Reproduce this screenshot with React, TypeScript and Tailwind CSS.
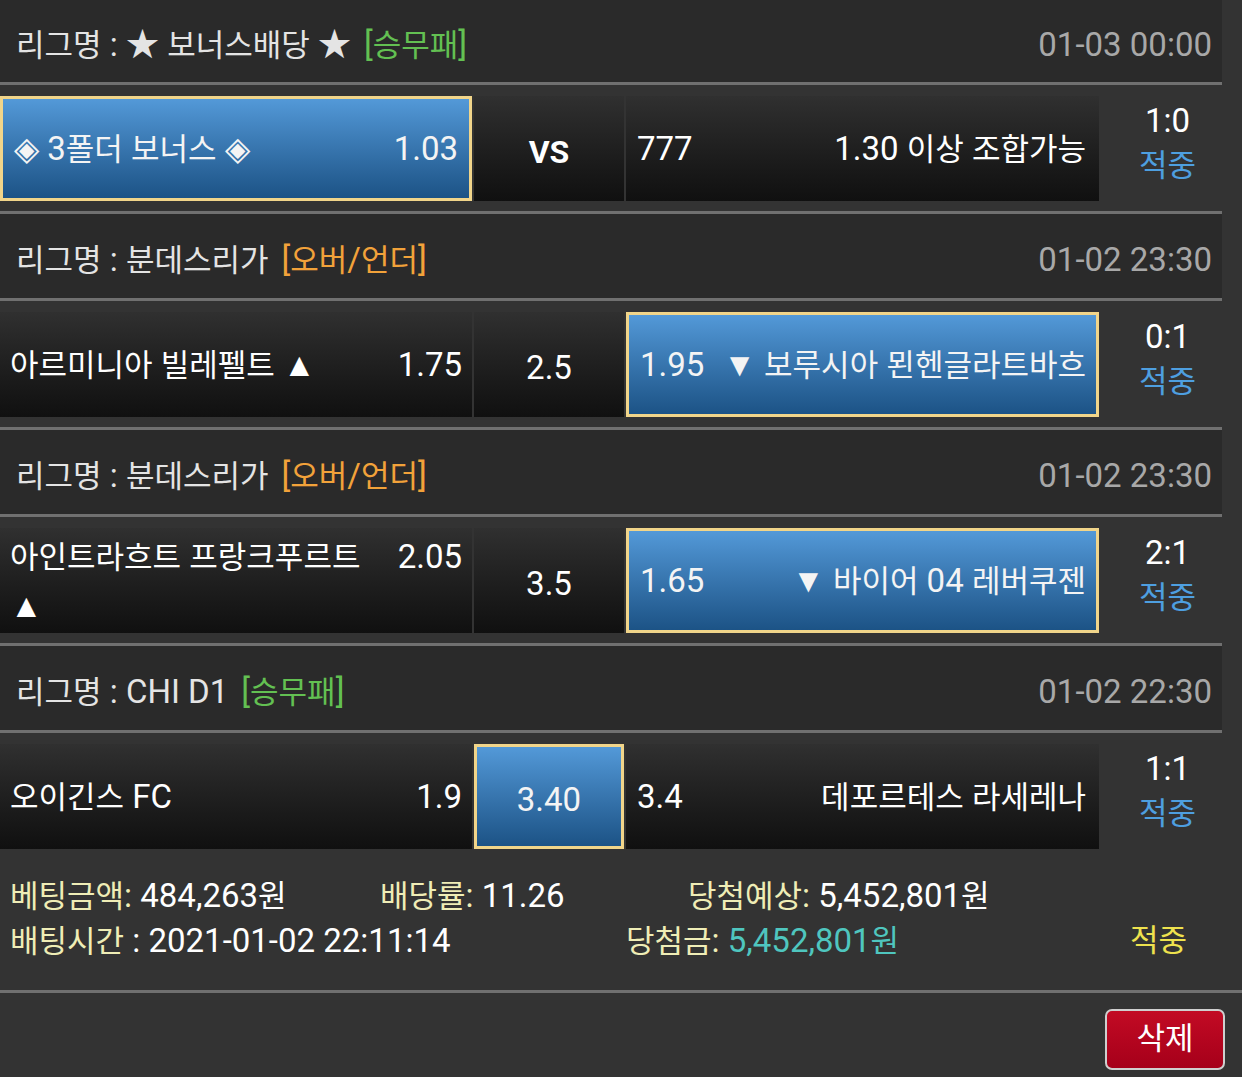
import React from "react";

const FONT = "font-['Roboto','Liberation_Sans','Noto_Sans_CJK_KR',sans-serif]";

function T({ s }: { s: string }) {
  const parts = s.split(/([\u1100-\u11FF\u3130-\u318F\uAC00-\uD7AF]+)/);
  return (
    <>
      {parts.map((p, i) =>
        /[\u1100-\u11FF\u3130-\u318F\uAC00-\uD7AF]/.test(p) ? (
          <span key={i} className="text-[31px]">
            {p}
          </span>
        ) : (
          <React.Fragment key={i}>{p}</React.Fragment>
        )
      )}
    </>
  );
}

type HeaderProps = {
  league: string;
  tag: string;
  tagClass: string;
  date: string;
  h: string;
};

function Header({ league, tag, tagClass, date, h }: HeaderProps) {
  return (
    <>
      <div
        className={`w-[1222px] ${h} bg-[#2a2a2a] flex items-center justify-between pl-[16px] pr-[10px] pt-[8px] leading-[48px]`}
      >
        <div className="text-[#e4e4e4] whitespace-nowrap">
          <T s={league} />
          <span className={`ml-[13px] ${tagClass}`}>
            <T s={tag} />
          </span>
        </div>
        <div className="text-[#a8a8a8] whitespace-nowrap">{date}</div>
      </div>
      <div className="w-[1222px] h-[3px] bg-[#707070]" />
    </>
  );
}

const NORMAL = "bg-linear-to-b from-[#303030] to-[#101010] text-white";
const SELECTED =
  "bg-linear-to-b from-[#5399d8] to-[#1c5386] border-[3px] border-[#f1d58a] text-[#f4f4f4]";

type RowProps = {
  home: string;
  homeOdd: string;
  homeSel?: boolean;
  mid: string;
  midBold?: boolean;
  midSel?: boolean;
  awayOdd: string;
  away: string;
  awaySel?: boolean;
  score: string;
  last?: boolean;
};

function Row({
  home,
  homeOdd,
  homeSel,
  mid,
  midBold,
  midSel,
  awayOdd,
  away,
  awaySel,
  score,
  last,
}: RowProps) {
  return (
    <>
      <div className={`flex gap-[2px] pt-[11px] ${last ? "pb-0" : "pb-[10px]"}`}>
        <div
          className={`w-[472px] h-[105px] shrink-0 flex items-center pt-[1px] ${
            homeSel ? `${SELECTED} pl-[11px] pr-[11px]` : `${NORMAL} pl-[10px] pr-[10px]`
          }`}
        >
          <div className="flex w-full items-start justify-between leading-[48px]">
            <span className="flex-1 min-w-0">
              <T s={home} />
            </span>
            <span className="shrink-0 ml-[20px]">{homeOdd}</span>
          </div>
        </div>
        <div
          className={`w-[150px] h-[105px] shrink-0 flex items-center justify-center pt-[6px] ${
            midSel ? SELECTED : NORMAL
          } ${midBold ? "font-bold text-[32px]" : ""}`}
        >
          {mid}
        </div>
        <div
          className={`w-[473px] h-[105px] shrink-0 flex items-center justify-between leading-[48px] pt-[1px] ${
            awaySel ? `${SELECTED} pl-[11px] pr-[10px]` : `${NORMAL} pl-[11px] pr-[13px]`
          }`}
        >
          <span className="whitespace-nowrap">{awayOdd}</span>
          <span className="whitespace-nowrap">
            <T s={away} />
          </span>
        </div>
        <div className="flex-1 h-[105px] flex flex-col items-center pr-[8px] pt-[2px] leading-[45px]">
          <span className="text-white">{score}</span>
          <span className="text-[#4e9fe0] text-[31px]">적중</span>
        </div>
      </div>
      {!last && <div className="w-[1222px] h-[3px] bg-[#707070]" />}
    </>
  );
}

export default function App() {
  return (
    <div className={`${FONT} w-[1242px] h-[1077px] overflow-hidden bg-[#333333] text-[33px] text-white`}>
      <Header
        h="h-[82px]"
        league="리그명 : ★ 보너스배당 ★"
        tag="[승무패]"
        tagClass="text-[#63c052]"
        date="01-03 00:00"
      />
      <Row
        home={"◈ 3폴더 보너스 ◈"}
        homeOdd="1.03"
        homeSel
        mid="VS"
        midBold
        awayOdd="777"
        away="1.30 이상 조합가능"
        score="1:0"
      />
      <Header
        h="h-[84px]"
        league="리그명 : 분데스리가"
        tag="[오버/언더]"
        tagClass="text-[#f2a23a]"
        date="01-02 23:30"
      />
      <Row
        home="아르미니아 빌레펠트 ▲"
        homeOdd="1.75"
        mid="2.5"
        awayOdd="1.95"
        away="▼ 보루시아 묀헨글라트바흐"
        awaySel
        score="0:1"
      />
      <Header
        h="h-[84px]"
        league="리그명 : 분데스리가"
        tag="[오버/언더]"
        tagClass="text-[#f2a23a]"
        date="01-02 23:30"
      />
      <Row
        home="아인트라흐트 프랑크푸르트 ▲"
        homeOdd="2.05"
        mid="3.5"
        awayOdd="1.65"
        away="▼ 바이어 04 레버쿠젠"
        awaySel
        score="2:1"
      />
      <Header
        h="h-[84px]"
        league="리그명 : CHI D1"
        tag="[승무패]"
        tagClass="text-[#63c052]"
        date="01-02 22:30"
      />
      <Row
        home="오이긴스 FC"
        homeOdd="1.9"
        mid="3.40"
        midSel
        awayOdd="3.4"
        away="데포르테스 라세레나"
        score="1:1"
        last
      />

      <div className="h-[141px] pt-[25px] leading-[44px]">
        <div className="flex">
          <div className="w-[380px] pl-[10px] whitespace-nowrap">
            <span className="text-[#efedb6]">
              <T s="베팅금액:" />
            </span>
            <span className="text-white">
              <T s=" 484,263원" />
            </span>
          </div>
          <div className="w-[308px] whitespace-nowrap">
            <span className="text-[#efedb6]">
              <T s="배당률:" />
            </span>
            <span className="text-white"> 11.26</span>
          </div>
          <div className="whitespace-nowrap">
            <span className="text-[#efedb6]">
              <T s="당첨예상:" />
            </span>
            <span className="text-white">
              <T s=" 5,452,801원" />
            </span>
          </div>
        </div>
        <div className="flex">
          <div className="w-[626px] pl-[10px] whitespace-nowrap">
            <span className="text-[#efedb6]">
              <T s="배팅시간" />
            </span>
            <span className="text-white"> : 2021-01-02 22:11:14</span>
          </div>
          <div className="w-[504px] whitespace-nowrap">
            <span className="text-[#efedb6]">
              <T s="당첨금:" />
            </span>
            <span className="text-[#4fc6bf]">
              <T s=" 5,452,801원" />
            </span>
          </div>
          <div className="text-[#eee24e] text-[31px] whitespace-nowrap">적중</div>
        </div>
      </div>
      <div className="w-full h-[3px] bg-[#707070]" />
      <div className="h-[83px] flex justify-end items-start pt-[16px] pr-[17px]">
        <button className="w-[120px] h-[61px] rounded-[7px] border-2 border-[#cfcfcf] bg-linear-to-b from-[#c20b24] to-[#a6001a] text-white text-[31px] flex items-center justify-center">
          삭제
        </button>
      </div>
    </div>
  );
}
